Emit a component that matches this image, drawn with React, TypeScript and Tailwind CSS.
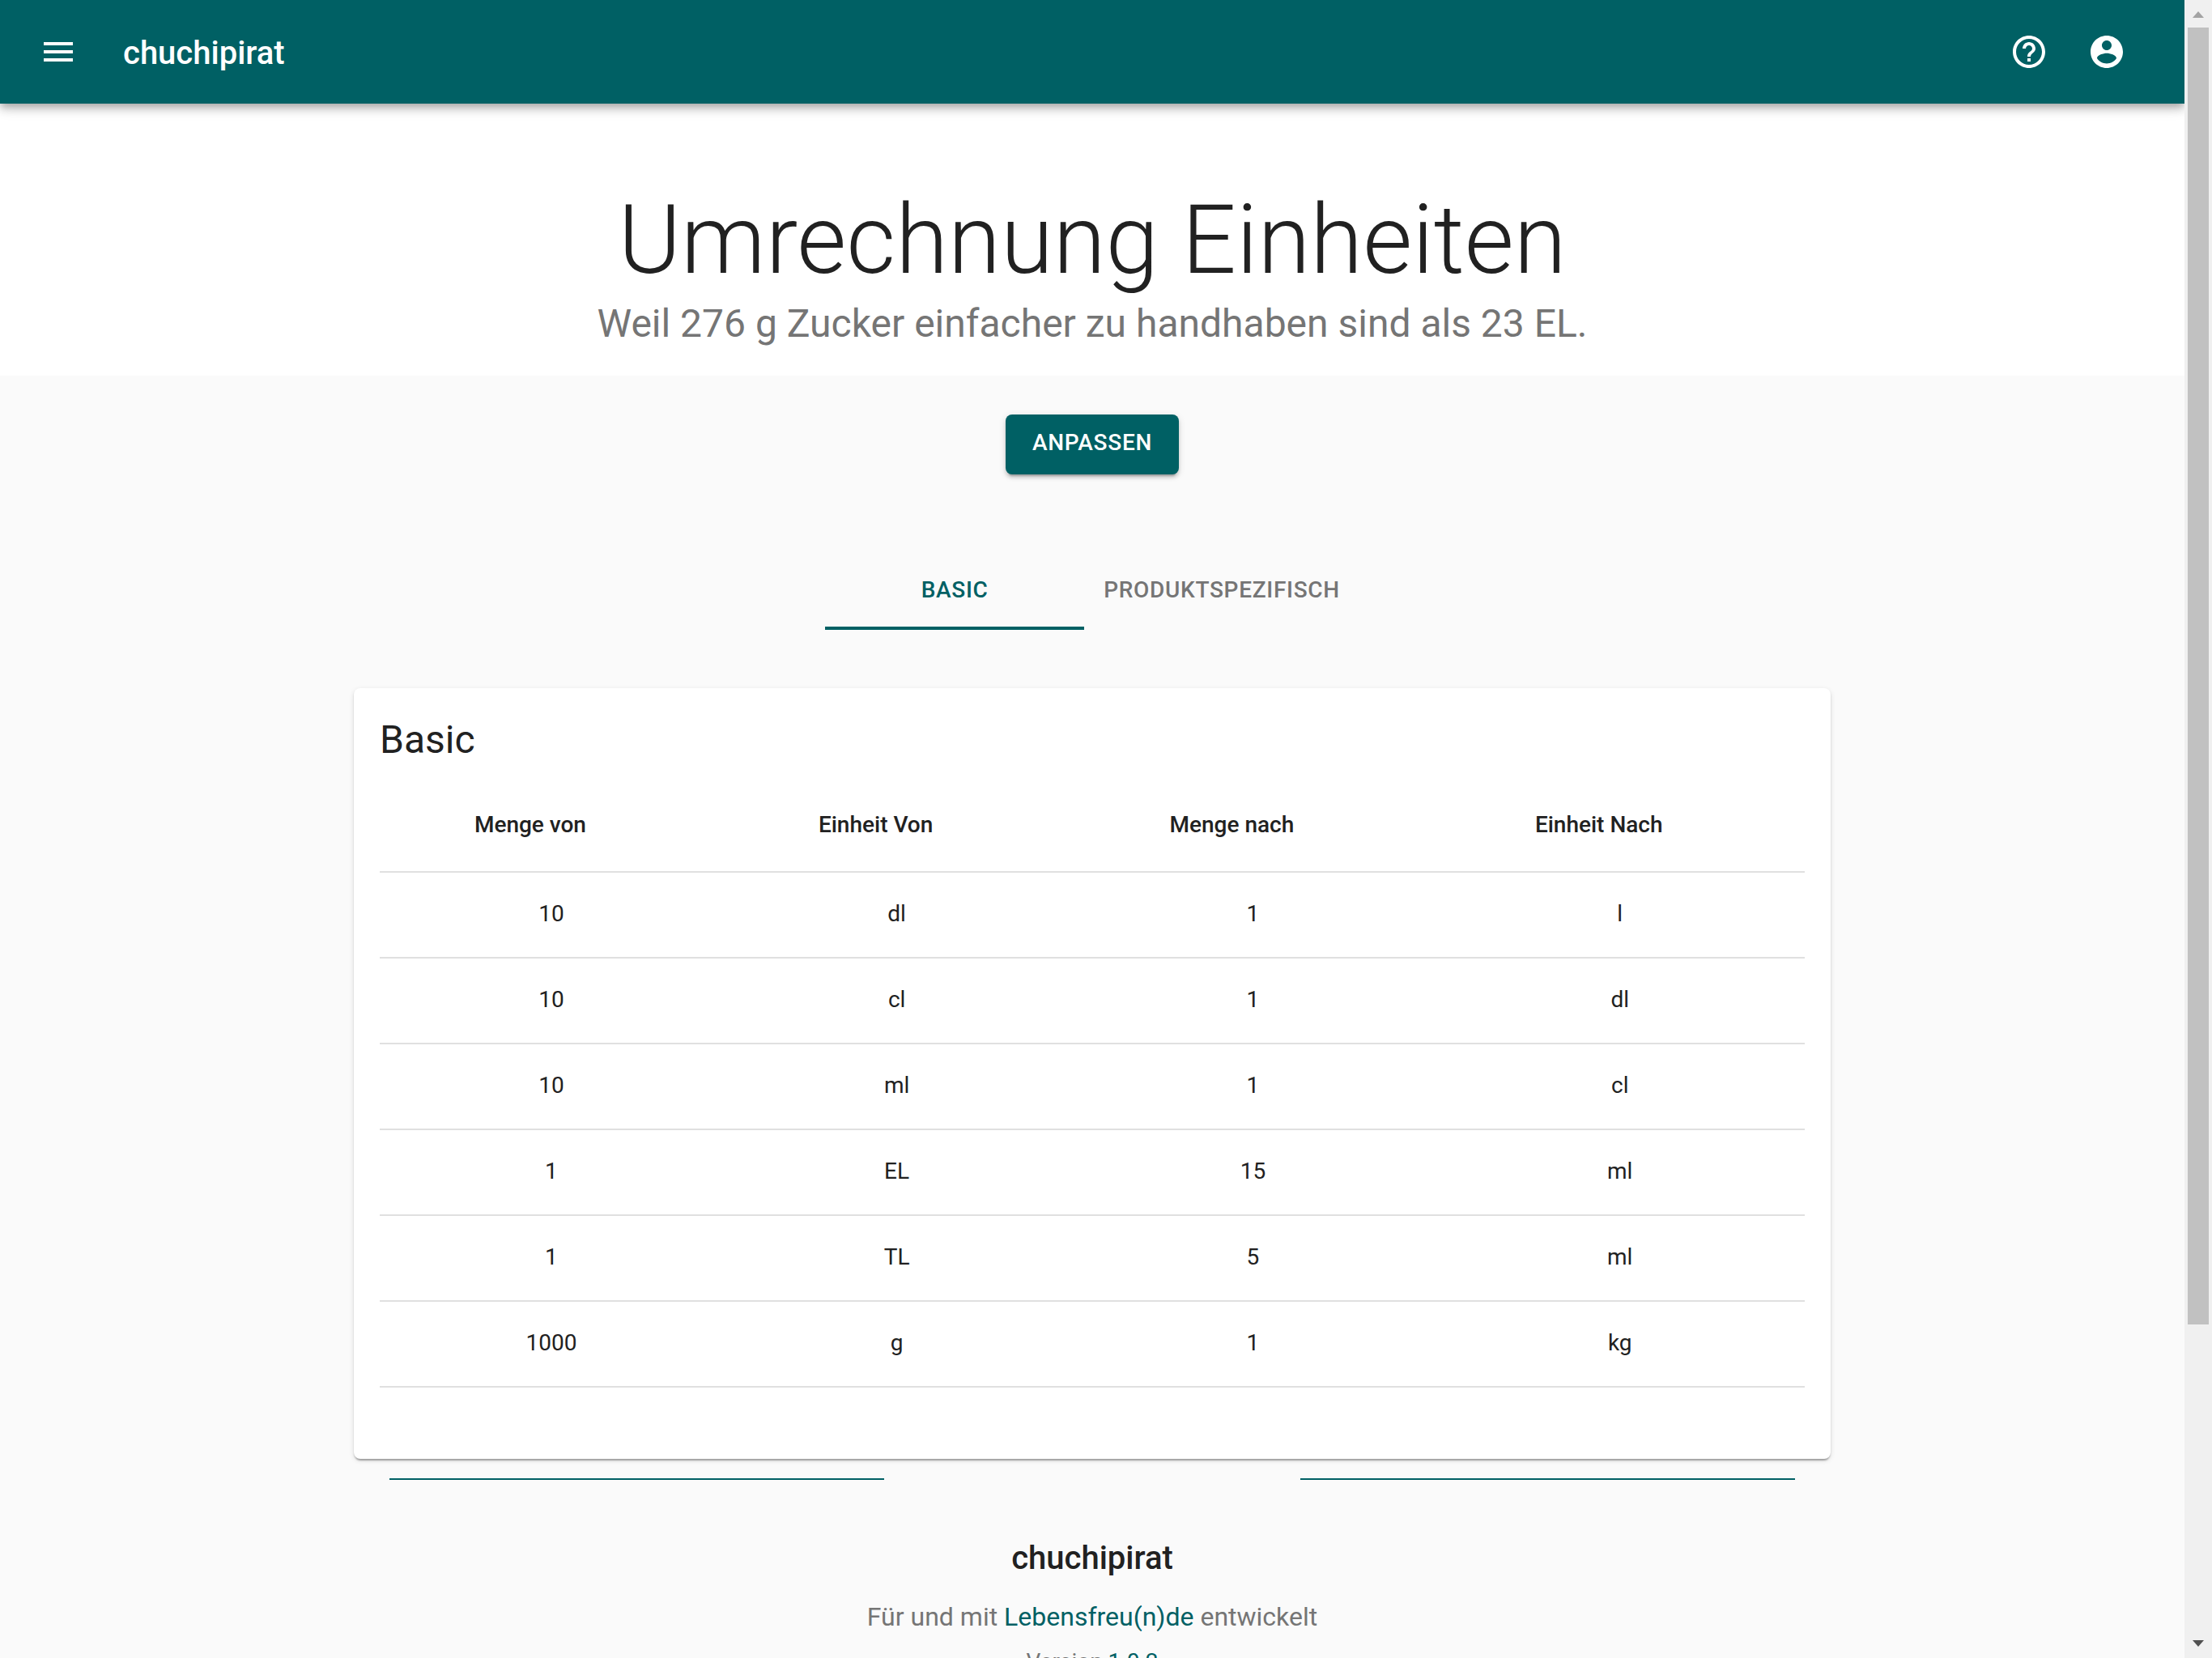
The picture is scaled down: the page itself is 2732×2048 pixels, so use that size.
import { useState } from "react";

const conversions = [
  ["10", "dl", "1", "l"],
  ["10", "cl", "1", "dl"],
  ["10", "ml", "1", "cl"],
  ["1", "EL", "15", "ml"],
  ["1", "TL", "5", "ml"],
  ["1000", "g", "1", "kg"],
];

const columns = ["Menge von", "Einheit Von", "Menge nach", "Einheit Nach"];

const tabs = ["Basic", "Produktspezifisch"];

const icons = {
  menu: "M3 18h18v-2H3v2zm0-5h18v-2H3v2zm0-7v2h18V6H3z",
  help: "M11 18h2v-2h-2v2zm1-16C6.48 2 2 6.48 2 12s4.48 10 10 10 10-4.48 10-10S17.52 2 12 2zm0 18c-4.41 0-8-3.59-8-8s3.59-8 8-8 8 3.59 8 8-3.59 8-8 8zm0-14c-2.21 0-4 1.79-4 4h2c0-1.1.9-2 2-2s2 .9 2 2c0 2-3 1.75-3 5h2c0-2.25 3-2.5 3-5 0-2.21-1.79-4-4-4z",
  account:
    "M12 2C6.48 2 2 6.48 2 12s4.48 10 10 10 10-4.48 10-10S17.52 2 12 2zm0 3c1.66 0 3 1.34 3 3s-1.34 3-3 3-3-1.34-3-3 1.34-3 3-3zm0 14.2c-2.5 0-4.71-1.28-6-3.22.03-1.99 4-3.08 6-3.08 1.99 0 5.97 1.09 6 3.08-1.29 1.94-3.5 3.22-6 3.22z",
  arrow: "M20 12l-1.41-1.41L13 16.17V4h-2v12.17l-5.58-5.59L4 12l8 8 8-8z",
};

function Icon({ path, className }: { path: string; className: string }) {
  return (
    <svg viewBox="0 0 24 24" className={className} fill="currentColor" aria-hidden="true">
      <path d={path} />
    </svg>
  );
}

function IconButton({ label, path }: { label: string; path: string }) {
  return (
    <button type="button" aria-label={label} className="rounded-full p-6">
      <Icon path={path} className="size-12" />
    </button>
  );
}

function AppBar() {
  return (
    <header className="relative z-10 flex h-32 shrink-0 items-center bg-[#006064] px-6 text-white shadow-[0_4px_8px_-2px_rgba(0,0,0,0.2),0_8px_10px_0_rgba(0,0,0,0.14),0_2px_20px_0_rgba(0,0,0,0.12)]">
      <IconButton label="Menü" path={icons.menu} />
      <span className="ml-8 grow pt-1 text-[40px] leading-[64px] font-medium">chuchipirat</span>
      <div className="mr-6 flex">
        <IconButton label="Hilfe" path={icons.help} />
        <IconButton label="Konto" path={icons.account} />
      </div>
    </header>
  );
}

function ConversionTable() {
  return (
    <table className="w-full text-center text-[28px]">
      <thead>
        <tr className="border-b-2 border-[#e0e0e0]">
          {columns.map((name) => (
            <th key={name} scope="col" className="px-8 pt-[31px] pb-[33px] font-medium">
              <button type="button" className="inline-flex items-center leading-[48px] whitespace-nowrap">
                {name}
                <Icon path={icons.arrow} className="mx-2 size-9 opacity-0" />
              </button>
            </th>
          ))}
        </tr>
      </thead>
      <tbody>
        {conversions.map((row) => (
          <tr key={row.join()} className="border-b-2 border-[#e0e0e0]">
            {row.map((cell, i) => (
              <td key={columns[i]} className="px-8 pt-[31px] pb-[33px] leading-[40px]">
                {cell}
              </td>
            ))}
          </tr>
        ))}
      </tbody>
    </table>
  );
}

function Footer() {
  return (
    <footer className="pt-6 text-center">
      <div className="grid grid-cols-[19fr_16fr_19fr] px-11">
        <hr className="border-t-2 border-[#006064]" />
        <hr className="col-start-3 border-t-2 border-[#006064]" />
      </div>
      <p className="mt-[65px] text-[40px] leading-[64px] font-medium">chuchipirat</p>
      <p className="mt-3 text-[32px] leading-[56px] text-[#757575]">
        Für und mit{" "}
        <a href="#lebensfreunde" className="text-[#006064]">
          Lebensfreu(n)de
        </a>{" "}
        entwickelt
      </p>
      <p className="mt-2 text-[28px] leading-[40px] text-[#757575]">
        Version{" "}
        <a href="#version" className="text-[#006064]">
          1.0.2
        </a>
      </p>
    </footer>
  );
}

function ScrollBar() {
  return (
    <div aria-hidden="true" className="flex w-[34px] shrink-0 flex-col items-center bg-[#f0f0f0]">
      <svg viewBox="0 0 34 34" className="h-[34px] w-full shrink-0">
        <path d="M17 14l7 8H10z" fill="#a3a3a3" />
      </svg>
      <div className="min-h-0 w-full grow px-1">
        <div className="h-[80.9%] bg-[#c1c1c1]" />
      </div>
      <svg viewBox="0 0 34 34" className="h-[34px] w-full shrink-0">
        <path d="M10 12h14l-7 8z" fill="#505050" />
      </svg>
    </div>
  );
}

export default function App() {
  const [active, setActive] = useState(tabs[0]);
  return (
    <div className="flex h-screen overflow-hidden bg-[#fafafa] font-['Roboto',sans-serif] text-[#212121]">
      <div className="flex min-w-0 grow flex-col overflow-hidden">
        <AppBar />
        <section className="bg-white pt-[98px] pb-8 text-center">
          <h1 className="text-[118px] leading-[142px] font-light">Umrechnung Einheiten</h1>
          <p className="text-[48px] leading-[64px] text-[#757575]">
            Weil 276 g Zucker einfacher zu handhaben sind als 23 EL.
          </p>
        </section>
        <main className="mx-auto w-full max-w-[1920px] px-12 pt-12">
          <div className="flex justify-center">
            <button
              type="button"
              className="rounded-lg bg-[#006064] px-[33px] pt-[11px] pb-[15px] text-[28px] leading-[48px] font-medium tracking-wide text-white uppercase shadow-[0_6px_2px_-4px_rgba(0,0,0,0.2),0_4px_4px_0_rgba(0,0,0,0.14),0_2px_10px_0_rgba(0,0,0,0.12)]"
            >
              Anpassen
            </button>
          </div>
          <div role="tablist" className="mt-24 flex justify-center">
            {tabs.map((tab) => (
              <button
                key={tab}
                type="button"
                role="tab"
                aria-selected={tab === active}
                onClick={() => setActive(tab)}
                className={
                  tab === active
                    ? "h-24 min-w-80 border-b-4 border-[#006064] px-6 pt-0.5 text-[28px] font-medium tracking-wide text-[#006064] uppercase"
                    : "h-24 min-w-80 border-b-4 border-transparent px-6 pt-0.5 text-[28px] font-medium tracking-wide text-[#757575] uppercase"
                }
              >
                {tab}
              </button>
            ))}
          </div>
          <section className="mt-[72px] rounded-lg bg-white px-8 pt-8 pb-[88px] shadow-[0_4px_2px_-2px_rgba(0,0,0,0.2),0_2px_2px_0_rgba(0,0,0,0.14),0_2px_6px_0_rgba(0,0,0,0.12)]">
            <h2 className="mb-[18px] text-[48px] leading-[64px]">{active}</h2>
            <ConversionTable />
          </section>
          <Footer />
        </main>
      </div>
      <ScrollBar />
    </div>
  );
}
